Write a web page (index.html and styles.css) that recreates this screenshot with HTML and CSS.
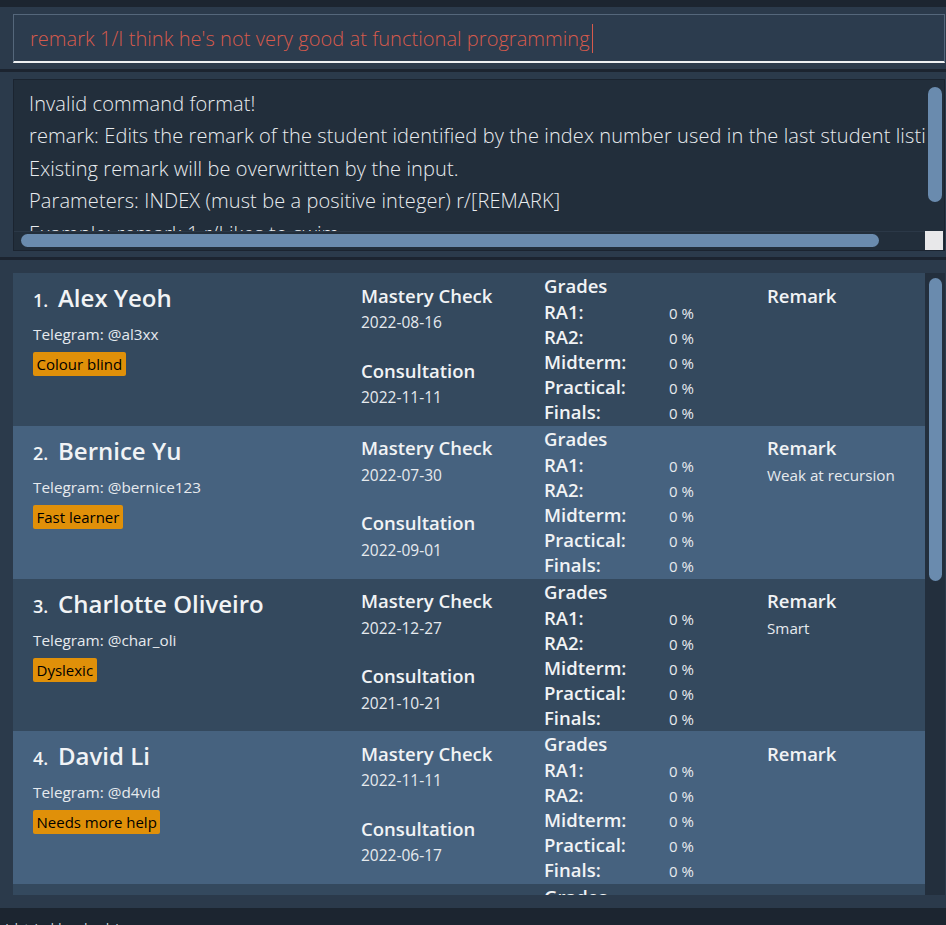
FILE: index.html
```html
<!DOCTYPE html>
<html>
<head>
<meta charset="utf-8">
<link rel="stylesheet" href="styles.css">
</head>
<body>
<div class="topband"></div>
<div class="command-pane">
  <div class="command-field"><span class="command-text">remark 1/I think he's not very good at functional programming</span><span class="caret"></span></div>
</div>
<div class="sep"></div>
<div class="result-pane">
  <div class="result-box">
    <div class="result-text">Invalid command format!
remark: Edits the remark of the student identified by the index number used in the last student listing. Existing remark will be overwritten by the input.
Existing remark will be overwritten by the input.
Parameters: INDEX (must be a positive integer) r/[REMARK]
Example: remark 1 r/Likes to swim.</div>
    <div class="vbar"><div class="vthumb"></div></div>
    <div class="hbar"><div class="hthumb"></div></div>
    <div class="corner"></div>
  </div>
</div>
<div class="sep sep-b"></div>
<div class="list-pane">
  <div class="list">
    <div class="cards">
      <div class="card odd">
        <div class="col-main">
          <div class="name-line"><span class="id">1.</span><span class="name">Alex Yeoh</span></div>
          <div class="telegram">Telegram: @al3xx</div>
          <div class="tags"><span class="tag">Colour blind</span></div>
        </div>
        <div class="col-dates">
          <div class="head">Mastery Check</div>
          <div class="date">2022-08-16</div>
          <div class="head head-2">Consultation</div>
          <div class="date">2022-11-11</div>
        </div>
        <div class="col-grades">
          <div class="grades-title">Grades</div>
          <div class="grow"><span class="glabel">RA1:</span><span class="gval">0 %</span></div>
          <div class="grow"><span class="glabel">RA2:</span><span class="gval">0 %</span></div>
          <div class="grow"><span class="glabel">Midterm:</span><span class="gval">0 %</span></div>
          <div class="grow"><span class="glabel">Practical:</span><span class="gval">0 %</span></div>
          <div class="grow"><span class="glabel">Finals:</span><span class="gval">0 %</span></div>
        </div>
        <div class="col-remark">
          <div class="head">Remark</div>
          <div class="remark"></div>
        </div>
      </div>
      <div class="card even">
        <div class="col-main">
          <div class="name-line"><span class="id">2.</span><span class="name">Bernice Yu</span></div>
          <div class="telegram">Telegram: @bernice123</div>
          <div class="tags"><span class="tag">Fast learner</span></div>
        </div>
        <div class="col-dates">
          <div class="head">Mastery Check</div>
          <div class="date">2022-07-30</div>
          <div class="head head-2">Consultation</div>
          <div class="date">2022-09-01</div>
        </div>
        <div class="col-grades">
          <div class="grades-title">Grades</div>
          <div class="grow"><span class="glabel">RA1:</span><span class="gval">0 %</span></div>
          <div class="grow"><span class="glabel">RA2:</span><span class="gval">0 %</span></div>
          <div class="grow"><span class="glabel">Midterm:</span><span class="gval">0 %</span></div>
          <div class="grow"><span class="glabel">Practical:</span><span class="gval">0 %</span></div>
          <div class="grow"><span class="glabel">Finals:</span><span class="gval">0 %</span></div>
        </div>
        <div class="col-remark">
          <div class="head">Remark</div>
          <div class="remark">Weak at recursion</div>
        </div>
      </div>
      <div class="card odd">
        <div class="col-main">
          <div class="name-line"><span class="id">3.</span><span class="name">Charlotte Oliveiro</span></div>
          <div class="telegram">Telegram: @char_oli</div>
          <div class="tags"><span class="tag">Dyslexic</span></div>
        </div>
        <div class="col-dates">
          <div class="head">Mastery Check</div>
          <div class="date">2022-12-27</div>
          <div class="head head-2">Consultation</div>
          <div class="date">2021-10-21</div>
        </div>
        <div class="col-grades">
          <div class="grades-title">Grades</div>
          <div class="grow"><span class="glabel">RA1:</span><span class="gval">0 %</span></div>
          <div class="grow"><span class="glabel">RA2:</span><span class="gval">0 %</span></div>
          <div class="grow"><span class="glabel">Midterm:</span><span class="gval">0 %</span></div>
          <div class="grow"><span class="glabel">Practical:</span><span class="gval">0 %</span></div>
          <div class="grow"><span class="glabel">Finals:</span><span class="gval">0 %</span></div>
        </div>
        <div class="col-remark">
          <div class="head">Remark</div>
          <div class="remark">Smart</div>
        </div>
      </div>
      <div class="card even">
        <div class="col-main">
          <div class="name-line"><span class="id">4.</span><span class="name">David Li</span></div>
          <div class="telegram">Telegram: @d4vid</div>
          <div class="tags"><span class="tag">Needs more help</span></div>
        </div>
        <div class="col-dates">
          <div class="head">Mastery Check</div>
          <div class="date">2022-11-11</div>
          <div class="head head-2">Consultation</div>
          <div class="date">2022-06-17</div>
        </div>
        <div class="col-grades">
          <div class="grades-title">Grades</div>
          <div class="grow"><span class="glabel">RA1:</span><span class="gval">0 %</span></div>
          <div class="grow"><span class="glabel">RA2:</span><span class="gval">0 %</span></div>
          <div class="grow"><span class="glabel">Midterm:</span><span class="gval">0 %</span></div>
          <div class="grow"><span class="glabel">Practical:</span><span class="gval">0 %</span></div>
          <div class="grow"><span class="glabel">Finals:</span><span class="gval">0 %</span></div>
        </div>
        <div class="col-remark">
          <div class="head">Remark</div>
          <div class="remark"></div>
        </div>
      </div>
      <div class="card odd">
        <div class="col-main">
          <div class="name-line"><span class="id">5.</span><span class="name">Irfan Ibrahim</span></div>
          <div class="telegram">Telegram: @irfan</div>
          <div class="tags"><span class="tag">Quiet</span></div>
        </div>
        <div class="col-dates">
          <div class="head">Mastery Check</div>
          <div class="date">2022-10-10</div>
          <div class="head head-2">Consultation</div>
          <div class="date">2022-10-12</div>
        </div>
        <div class="col-grades">
          <div class="grades-title">Grades</div>
          <div class="grow"><span class="glabel">RA1:</span><span class="gval">0 %</span></div>
        </div>
        <div class="col-remark">
          <div class="head">Remark</div>
          <div class="remark"></div>
        </div>
      </div>
    </div>
    <div class="list-bar"><div class="list-thumb"></div></div>
  </div>
</div>
<div class="status">.\data\addressbook.json</div>
</body>
</html>
```
FILE: styles.css
```css
html, body {
  margin: 0;
  padding: 0;
}
body {
  width: 946px;
  height: 925px;
  overflow: hidden;
  background: #1c2530;
  font-family: "Open Sans", "Noto Sans", sans-serif;
  color: #f1f3f5;
}
.topband {
  height: 7px;
  background: #1c2530;
}
.command-pane {
  background: #2b3a4b;
  padding: 7px 1px 6px 13px;
}
.command-field {
  box-sizing: border-box;
  height: 49px;
  border: 1px solid #55677b;
  border-bottom: 2px solid #eef0f2;
  background: #2c3c4e;
  display: flex;
  align-items: center;
  padding-left: 16px;
  color: #d65a4c;
  font-size: 20px;
  font-weight: 300;
  white-space: pre;
}
.command-text {
  letter-spacing: 0.05px;
}
.caret {
  width: 1px;
  height: 29px;
  background: #d65a4c;
  margin-left: 2px;
}
.sep {
  height: 3px;
  background: #1c2430;
}
.sep-b {
  height: 3px;
}
.result-pane {
  background: #2b3a4b;
  padding: 7px 1px 6px 13px;
}
.result-box {
  box-sizing: border-box;
  height: 172px;
  border: 1px solid #1b2430;
  background: #222e3b;
  display: grid;
  grid-template-columns: 1fr 19px;
  grid-template-rows: 151px 19px;
}
.result-text {
  padding: 7.5px 0 0 15px;
  font-size: 20px;
  font-weight: 300;
  line-height: 32.5px;
  letter-spacing: 0.1px;
  color: #e9ecef;
  white-space: pre;
  overflow: hidden;
}
.vbar {
  padding: 7px 2px 0 3px;
}
.vthumb {
  height: 115px;
  background: #6a8bae;
  border-radius: 7px;
}
.hbar {
  border-top: 1px solid #2b3847;
  padding: 2px 0 0 7px;
}
.hthumb {
  width: 858px;
  height: 13px;
  background: #6a8bae;
  border-radius: 7px;
}
.corner {
  background: #e8e8ea;
  margin-right: 1px;
}
.list-pane {
  background: #2b3a4b;
  padding: 13px 1px 13px 13px;
}
.list {
  display: flex;
  height: 622px;
  background: #222e3b;
}
.cards {
  flex: 1;
  overflow: hidden;
}
.list-bar {
  width: 20px;
  background: #232f3d;
  padding: 5px 3px 0 4px;
  box-sizing: border-box;
}
.list-thumb {
  height: 303px;
  background: #6a8bae;
  border-radius: 7px;
}
.card {
  height: 152.75px;
  display: flex;
}
.odd {
  background: #34495e;
}
.even {
  background: #46627f;
}
.col-main {
  width: 348px;
  box-sizing: border-box;
  padding: 10px 0 0 20px;
}
.name-line {
  display: flex;
  align-items: baseline;
  height: 30px;
  line-height: 30px;
}
.id {
  font-size: 18px;
  font-weight: 600;
  width: 25px;
}
.name {
  font-size: 24px;
  font-weight: 600;
}
.telegram {
  margin-top: 11px;
  font-size: 15.3px;
  line-height: 20px;
  color: #e6eaee;
}
.tags {
  margin-top: 8px;
  display: flex;
}
.tag {
  background: #e09009;
  color: #000;
  font-size: 15px;
  line-height: 24px;
  padding: 0 3.5px;
  border-radius: 2px;
}
.col-dates {
  width: 183px;
  padding-top: 10.5px;
}
.head {
  font-size: 18.5px;
  font-weight: 600;
  line-height: 24px;
}
.head-2 {
  margin-top: 26.5px;
}
.date {
  margin-top: 4.5px;
  font-size: 15.5px;
  line-height: 20px;
  color: #e6eaee;
}
.col-grades {
  width: 223px;
}
.grades-title {
  font-size: 18.5px;
  font-weight: 600;
  line-height: 26px;
  height: 26px;
}
.grow {
  display: flex;
  align-items: baseline;
  height: 25px;
  line-height: 25px;
  font-size: 18.5px;
}
.glabel {
  width: 125px;
  font-size: 18.5px;
  font-weight: 600;
}
.gval {
  font-size: 15px;
  color: #e6eaee;
}
.col-remark {
  flex: 1;
  padding-top: 10.5px;
}
.remark {
  margin-top: 4.5px;
  font-size: 15.2px;
  line-height: 20px;
  color: #e6eaee;
}
.status {
  margin-top: 14px;
  padding-left: 3px;
  font-size: 12px;
  line-height: 14px;
  color: #dfe3e8;
}
```
